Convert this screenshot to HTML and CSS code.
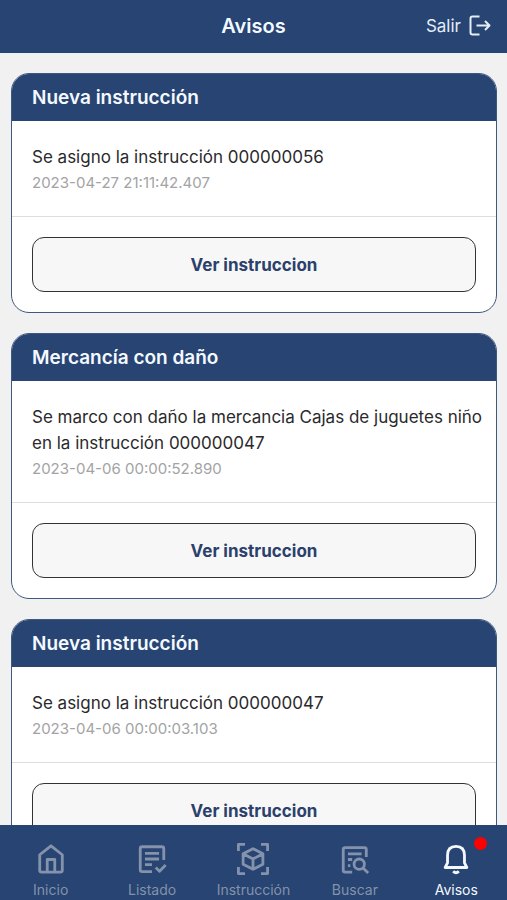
FILE: index.html
```
<!DOCTYPE html>
<html lang="es">
<head>
  <meta charset="UTF-8">
  <meta name="viewport" content="width=device-width, initial-scale=1.0">
  <title>Avisos</title>
  <link rel="stylesheet" href="styles.css">
</head>
<body>

<header class="barra">
  <h1>Avisos</h1>
  <button class="salir" type="button">
    Salir
    <svg width="22" height="22" viewBox="0 0 22 22">
      <path d="M10.500 1.500H3.500Q1.500 1.500 1.500 3.500V17.500Q1.500 19.500 3.500 19.500H10.500M7.500 10.500H20M16 6L20.500 10.500L16 15"/>
    </svg>
  </button>
</header>

<main class="lista">
  <article class="aviso">
    <h2>Nueva instrucción</h2>
    <div class="contenido">
      <p>Se asigno la instrucción 000000056</p>
      <time>2023-04-27 21:11:42.407</time>
    </div>
    <div class="acciones">
      <button type="button">Ver instruccion</button>
    </div>
  </article>

  <article class="aviso">
    <h2>Mercancía con daño</h2>
    <div class="contenido">
      <p>Se marco con daño la mercancia Cajas de juguetes niño en la instrucción 000000047</p>
      <time>2023-04-06 00:00:52.890</time>
    </div>
    <div class="acciones">
      <button type="button">Ver instruccion</button>
    </div>
  </article>

  <article class="aviso">
    <h2>Nueva instrucción</h2>
    <div class="contenido">
      <p>Se asigno la instrucción 000000047</p>
      <time>2023-04-06 00:00:03.103</time>
    </div>
    <div class="acciones">
      <button type="button">Ver instruccion</button>
    </div>
  </article>
</main>

<nav class="menu">
  <a href="#inicio">
    <svg width="32" height="32" viewBox="0 0 34 34">
      <path d="M5 12.500L17 3L29 12.500V29Q29 31 27 31H7Q5 31 5 29ZM13 30V17.500H21V30"/>
    </svg>
    Inicio
  </a>
  <a href="#listado">
    <svg width="32" height="32" viewBox="0 0 34 34">
      <path d="M17 30.500H6.500Q4.500 30.500 4.500 28.500V6Q4.500 4 6.500 4H27.500Q29.500 4 29.500 6V18M9.500 11H24.500M9.500 17H24.500M9.500 23H17M21 26L25 30L31.500 23.500"/>
    </svg>
    Listado
  </a>
  <a href="#instruccion">
    <svg width="32" height="32" viewBox="0 0 34 34">
      <path d="M1.500 8.500V1.500H8.500M25.500 1.500H32.500V8.500M32.500 25.500V32.500H25.500M8.500 32.500H1.500V25.500M17 6L27.500 11.500V22.500L17 28L6.500 22.500V11.500ZM6.500 11.500L17 17L27.500 11.500M17 17V28"/>
    </svg>
    Instrucción
  </a>
  <a href="#buscar">
    <svg width="32" height="32" viewBox="0 0 34 34">
      <path d="M14 31H6.500Q4.500 31 4.500 29V7Q4.500 5 6.500 5H27Q29 5 29 7V15M9.500 11.500H24M9.500 17.500H14M9.500 24H12"/>
      <circle cx="21.500" cy="22.500" r="5.500"/>
      <path d="M25.500 26.500L31 32"/>
    </svg>
    Buscar
  </a>
  <a class="activo" href="#avisos">
    <svg width="32" height="32" viewBox="0 0 34 34">
      <path d="M5.500 26H28.500L26 21V13Q26 3.500 17 3.500Q8 3.500 8 13V21ZM14 30Q17 33 20 30"/>
    </svg>
    Avisos
    <span class="punto"></span>
  </a>
</nav>

</body>
</html>
```
FILE: styles.css
```
* {
  box-sizing: border-box;
}
body {
  display: flex;
  flex-direction: column;
  height: 100vh;
  margin: 0;
  background-color: #f1f1f2;
  color: #2a2a2c;
  font-family: Inter, "Liberation Sans", sans-serif;
}
h1, h2, p {
  margin: 0;
}
button {
  font-family: inherit;
  cursor: pointer;
}
svg {
  fill: none;
  stroke: currentColor;
  stroke-width: 2;
  stroke-linejoin: round;
}
.barra {
  display: grid;
  grid-template-columns: 1fr auto 1fr;
  align-items: center;
  flex: none;
  height: 53px;
  padding: 0 16px 2px;
  background-color: #274472;
  color: #f4f9ff;
}
.barra h1 {
  grid-column: 2;
  font-size: 20px;
  font-weight: 600;
}
.salir {
  display: flex;
  align-items: center;
  justify-self: end;
  gap: 8px;
  padding: 0;
  border: 0;
  background: none;
  color: #e4edf8;
  font-size: 17px;
}
.lista {
  display: flex;
  flex-direction: column;
  flex: 1;
  gap: 20px;
  min-height: 0;
  padding: 20px 10px 20px 11px;
  overflow-y: auto;
  scrollbar-width: none;
}
.aviso {
  flex: none;
  border: 1px solid #3f5880;
  border-radius: 18px;
  background-color: #fff;
  overflow: hidden;
}
.aviso h2 {
  padding: 1px 20px 0;
  background-color: #274472;
  color: #f4f9ff;
  font-size: 19px;
  font-weight: 600;
  line-height: 46px;
}
.contenido {
  padding: 23px 10px 20px 20px;
  border-bottom: 1px solid #dcdedf;
  font-size: 17px;
  line-height: 26px;
}
.contenido time {
  display: block;
  color: #a3a3a5;
  font-size: 15px;
}
.acciones {
  padding: 20px;
}
.acciones button {
  display: block;
  width: 100%;
  height: 55px;
  border: 1px solid #333;
  border-radius: 12px;
  background-color: #f7f7f8;
  color: #2b416b;
  font-size: 17px;
  font-weight: 700;
}
.menu {
  display: grid;
  grid-template-columns: repeat(5, 1fr);
  flex: none;
  height: 75px;
  padding-top: 18px;
  background-color: #274472;
}
.menu a {
  display: flex;
  flex-direction: column;
  align-items: center;
  gap: 6px;
  position: relative;
  color: #8492ab;
  font-size: 14px;
  line-height: 18px;
  text-decoration: none;
}
.menu svg {
  stroke-width: 3;
}
.menu .activo {
  color: #f4f9ff;
}
.punto {
  position: absolute;
  top: -6px;
  left: calc(50% + 18px);
  width: 13px;
  height: 13px;
  border-radius: 50%;
  background-color: #f00;
}
```
